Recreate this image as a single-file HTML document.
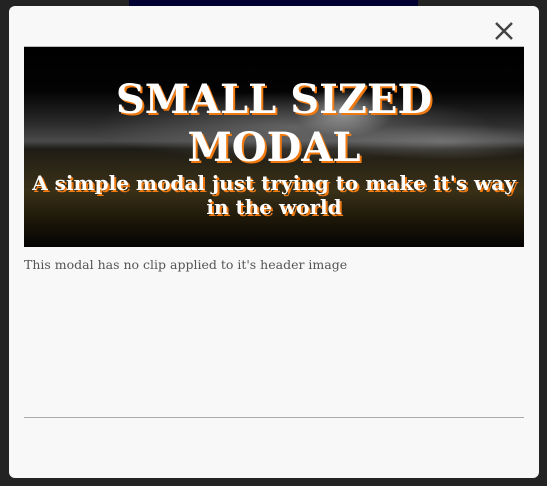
<!DOCTYPE html>
<html><head><style>
html,body{margin:0;padding:0;width:547px;height:486px;background:#232323;overflow:hidden;font-family:"DejaVu Serif","Liberation Serif",serif}
.bar{position:absolute;left:129px;top:0;width:289px;height:6px;background:#000033}
.modal{position:absolute;left:9px;top:6px;width:530px;height:472px;background:#f8f8f8;border-radius:6px}
.x{position:absolute;left:494px;top:21px;width:20px;height:20px}
.hdr{position:absolute;left:24px;top:46px;width:500px;height:1px;background:#bbb}
.img{position:absolute;left:24px;top:47px;width:500px;height:200px;overflow:hidden;
background:
radial-gradient(ellipse 50px 25px at 320px 65px,rgba(220,220,220,.55),transparent),
radial-gradient(ellipse 200px 35px at 270px 80px,rgba(140,140,140,.55),transparent),
radial-gradient(ellipse 110px 18px at 420px 95px,rgba(160,160,160,.45),transparent),
linear-gradient(#000 0,#030303 22%,#2a2a2a 38%,#4a4a4a 47%,#1e1c16 51%,#2e2816 62%,#3a3018 72%,#1e180a 86%,#050402 100%)}
.t{position:absolute;left:0;width:500px;text-align:center;color:#fff;font-weight:bold;text-shadow:2px 2px 0 #f07a10}
.t1{top:29px;font-size:40px;line-height:48px}
.t2{top:124px;font-size:20px;line-height:24px}
.p{position:absolute;left:24px;top:257px;font-size:12.5px;color:#555}
.ln{position:absolute;left:24px;top:417px;width:500px;height:1px;background:#aaa}
</style></head><body>
<div class="bar"></div>
<div class="modal"></div>
<svg class="x" viewBox="0 0 20 20"><path d="M2 2L18 18M18 2L2 18" stroke="#444" stroke-width="2.4"/></svg>
<div class="hdr"></div>
<div class="img">
<div class="t t1">SMALL SIZED<br>MODAL</div>
<div class="t t2">A simple modal just trying to make it's way<br>in the world</div>
</div>
<div class="p">This modal has no clip applied to it's header image</div>
<div class="ln"></div>
</body></html>
